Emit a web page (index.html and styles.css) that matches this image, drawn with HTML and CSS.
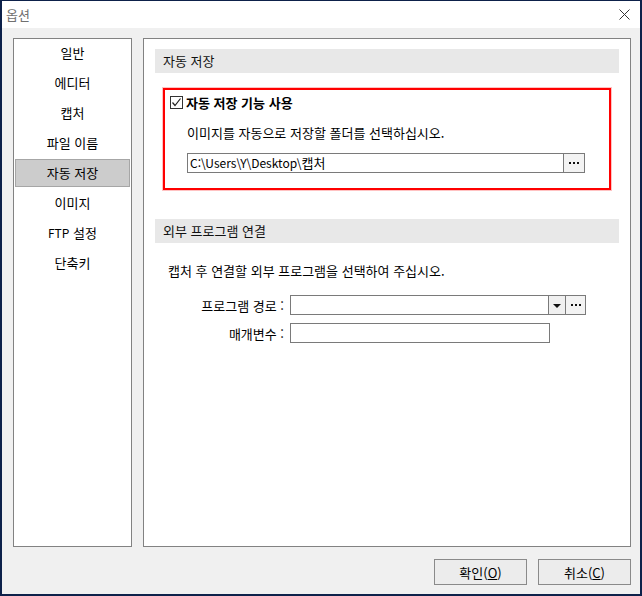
FILE: index.html
```html
<!DOCTYPE html>
<html lang="ko">
<head>
  <meta charset="UTF-8">
  <title>옵션</title>
  <link rel="stylesheet" href="styles.css">
</head>
<body>

  <div class="window">
    <div class="titlebar">
      <span class="title">옵션</span>
      <svg class="close" width="11" height="11" viewBox="0 0 11 11">
        <path d="M0.5 0.5 L10.5 10.5 M10.5 0.5 L0.5 10.5" stroke="#333" stroke-width="1" fill="none"/>
      </svg>
    </div>

    <div class="dialog-body">
      <div class="main">
        <ul class="nav">
          <li>일반</li>
          <li>에디터</li>
          <li>캡처</li>
          <li>파일 이름</li>
          <li class="selected">자동 저장</li>
          <li>이미지</li>
          <li><span class="latin">FTP</span> 설정</li>
          <li>단축키</li>
        </ul>

        <div class="page">
          <div class="section-head">자동 저장</div>

          <div class="highlight">
            <div class="check-row">
              <span class="checkbox">
                <svg width="11" height="11" viewBox="0 0 11 11">
                  <path d="M1.5 5.5 L4 8.5 L9.5 1.5" stroke="#222" stroke-width="1.2" fill="none"/>
                </svg>
              </span>
              <span class="check-label">자동 저장 기능 사용</span>
            </div>
            <p class="hint">이미지를 자동으로 저장할 폴더를 선택하십시오.</p>
            <div class="path-row">
              <div class="path-input"><span class="latin">C:\Users\Y\Desktop\</span>캡처</div>
              <div class="dots-btn"><span></span><span></span><span></span></div>
            </div>
          </div>

          <div class="section-head second">외부 프로그램 연결</div>
          <p class="hint indent">캡처 후 연결할 외부 프로그램을 선택하여 주십시오.</p>

          <div class="field-row">
            <span class="field-label">프로그램 경로 :</span>
            <div class="combo">
              <div class="combo-text"></div>
              <div class="combo-arrow"><i></i></div>
              <div class="combo-dots"><span></span><span></span><span></span></div>
            </div>
          </div>

          <div class="field-row params">
            <span class="field-label">매개변수 :</span>
            <div class="text-input"></div>
          </div>
        </div>
      </div>

      <div class="actions">
        <button class="btn">확인(<u>O</u>)</button>
        <button class="btn">취소(<u>C</u>)</button>
      </div>
    </div>
  </div>

</body>
</html>
```

FILE: styles.css
```css
html, body {
  margin: 0;
  padding: 0;
  background: #f0f0f0;
}

body {
  font-family: "Noto Sans CJK KR", "Noto Sans", sans-serif;
  font-size: 13px;
  color: #000;
}

/* latin runs are a touch narrower in the original */
.latin {
  font-size: 12px;
}

.window {
  box-sizing: border-box;
  width: 642px;
  height: 596px;
  border: 2px solid #0d214a;
  border-top-width: 1px;
  background: #f0f0f0;
}

/* title bar */
.titlebar {
  height: 27px;
  background: #fff;
  display: flex;
  align-items: center;
  justify-content: space-between;
  padding: 0 10px 0 4px;
}

.title {
  color: #707070;
  font-size: 13px;
  line-height: 27px;
  margin-top: -1px;
}

.close {
  margin-top: -1px;
}

.dialog-body {
  padding: 10px 9px 0 11px;
}

.main {
  display: flex;
  gap: 11px;
  height: 509px;
}

/* left list */
.nav {
  box-sizing: border-box;
  width: 119px;
  height: 100%;
  margin: 0;
  padding: 0;
  list-style: none;
  background: #fff;
  border: 1px solid #828282;
}

.nav li {
  box-sizing: border-box;
  height: 28px;
  line-height: 28px;
  margin: 0 1px 2px 1px;
  text-align: center;
}

.nav li.selected {
  background: #cccccc;
  border: 1px solid #a6a6a6;
  line-height: 26px;
}

/* right page */
.page {
  box-sizing: border-box;
  flex: 1;
  height: 100%;
  background: #fff;
  border: 1px solid #828282;
  padding: 10px 11px;
}

.section-head {
  height: 24px;
  line-height: 24px;
  padding-left: 8px;
  background: #e8e8e8;
  color: #111;
}

.section-head.second {
  margin-top: 29px;
}

.highlight {
  margin: 15px 8px 0;
  border: 2px solid #ff0000;
  box-shadow: 0 0 0 1px rgba(255, 80, 80, 0.35);
  padding: 6px 0 15px 5px;
}

.check-row {
  display: flex;
  align-items: center;
  height: 13px;
}

.checkbox {
  box-sizing: border-box;
  width: 13px;
  height: 13px;
  border: 1px solid #333;
  display: flex;
  align-items: center;
  justify-content: center;
  margin-right: 3px;
}

.check-label {
  font-weight: bold;
  line-height: 13px;
}

.hint {
  margin: 16px 0 0 17px;
  line-height: 16px;
}

.hint.indent {
  margin: 20px 0 0 13px;
}

.path-row {
  display: flex;
  margin: 12px 0 0 17px;
  height: 20px;
}

.path-input {
  box-sizing: border-box;
  width: 377px;
  height: 20px;
  border: 1px solid #7a7a7a;
  line-height: 18px;
  padding-left: 2px;
}

.dots-btn,
.combo-dots {
  box-sizing: border-box;
  display: flex;
  align-items: center;
  justify-content: center;
  gap: 2px;
  background: #f3f3f3;
}

.dots-btn {
  width: 21px;
  height: 20px;
  border: 1px solid #7a7a7a;
  border-left: none;
}

.dots-btn span,
.combo-dots span {
  width: 2px;
  height: 2px;
  background: #111;
}

/* external program rows */
.field-row {
  display: flex;
  align-items: center;
  margin-top: 16px;
  height: 20px;
}

.field-row.params {
  margin-top: 8px;
}

.field-label {
  width: 129px;
  text-align: right;
  margin-right: 6px;
}

.combo {
  box-sizing: border-box;
  display: flex;
  width: 296px;
  height: 20px;
  border: 1px solid #7a7a7a;
}

.combo-text {
  flex: 1;
}

.combo-arrow {
  width: 16px;
  border-left: 1px solid #7a7a7a;
  background: #f0f0f0;
  display: flex;
  align-items: center;
  justify-content: center;
}

.combo-arrow i {
  width: 0;
  height: 0;
  border-left: 4px solid transparent;
  border-right: 4px solid transparent;
  border-top: 4px solid #111;
  margin-top: 2px;
}

.combo-dots {
  width: 20px;
  border-left: 1px solid #7a7a7a;
}

.text-input {
  box-sizing: border-box;
  width: 260px;
  height: 20px;
  border: 1px solid #7a7a7a;
}

/* bottom buttons */
.actions {
  display: flex;
  justify-content: flex-end;
  gap: 11px;
  margin-top: 12px;
}

.btn {
  box-sizing: border-box;
  width: 93px;
  height: 26px;
  padding: 0;
  background: #ececec;
  border: 1px solid #8a8a8a;
  font-family: "Noto Sans CJK KR", "Noto Sans", sans-serif;
  font-size: 13px;
  color: #000;
}
```
